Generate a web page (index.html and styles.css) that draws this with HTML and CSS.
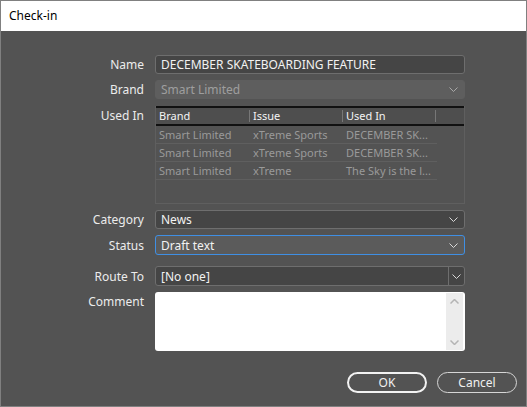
FILE: index.html
```html
<!DOCTYPE html>
<html lang="en">
<head>
  <meta charset="UTF-8" />
  <title>Check-in</title>
  <link rel="stylesheet" href="styles.css">
</head>
<body>
  <div class="window">
    <div class="titlebar">Check-in</div>

    <div class="form">
      <label class="lbl">Name</label>
      <div class="field text">DECEMBER SKATEBOARDING FEATURE</div>

      <label class="lbl">Brand</label>
      <div class="field select disabled">
        <span>Smart Limited</span>
        <svg class="chev" width="9" height="5" viewBox="0 0 9 5"><path d="M0.5 0.5 L4.5 4.5 L8.5 0.5" /></svg>
      </div>

      <label class="lbl top">Used In</label>
      <div class="table">
        <div class="thead">
          <div class="th c1">Brand</div>
          <div class="th c2">Issue</div>
          <div class="th c3">Used In</div>
        </div>
        <div class="tr">
          <div class="td c1">Smart Limited</div>
          <div class="td c2">xTreme Sports</div>
          <div class="td c3">DECEMBER SK...</div>
        </div>
        <div class="tr">
          <div class="td c1">Smart Limited</div>
          <div class="td c2">xTreme Sports</div>
          <div class="td c3">DECEMBER SK...</div>
        </div>
        <div class="tr">
          <div class="td c1">Smart Limited</div>
          <div class="td c2">xTreme</div>
          <div class="td c3">The Sky is the l...</div>
        </div>
      </div>

      <label class="lbl">Category</label>
      <div class="field select">
        <span>News</span>
        <svg class="chev" width="9" height="5" viewBox="0 0 9 5"><path d="M0.5 0.5 L4.5 4.5 L8.5 0.5" /></svg>
      </div>

      <label class="lbl">Status</label>
      <div class="field select focused">
        <span>Draft text</span>
        <svg class="chev" width="9" height="5" viewBox="0 0 9 5"><path d="M0.5 0.5 L4.5 4.5 L8.5 0.5" /></svg>
      </div>

      <label class="lbl route">Route To</label>
      <div class="field combo route">
        <span class="combo-text">[No one]</span>
        <span class="combo-btn">
          <svg class="chev" width="9" height="5" viewBox="0 0 9 5"><path d="M0.5 0.5 L4.5 4.5 L8.5 0.5" /></svg>
        </span>
      </div>

      <label class="lbl top comment-lbl">Comment</label>
      <div class="comment">
        <div class="scrollbar">
          <svg width="9" height="5" viewBox="0 0 9 5"><path d="M0.5 4.5 L4.5 0.5 L8.5 4.5" /></svg>
          <svg width="9" height="5" viewBox="0 0 9 5"><path d="M0.5 0.5 L4.5 4.5 L8.5 0.5" /></svg>
        </div>
      </div>
    </div>

    <div class="buttons">
      <button class="btn default">OK</button>
      <button class="btn">Cancel</button>
    </div>
  </div>
</body>
</html>
```

FILE: styles.css
```css
* {
  box-sizing: border-box;
}

html, body {
  margin: 0;
  padding: 0;
  background: #535353;
}

body {
  font-family: "Noto Sans", "Open Sans", sans-serif;
  font-size: 12px;
  color: #ececec;
}

.window {
  width: 527px;
  height: 407px;
  border: 1px solid #808080;
  background: #535353;
}

.titlebar {
  height: 30px;
  background: #ffffff;
  color: #000;
  padding-left: 8px;
  line-height: 30px;
}

.form {
  display: grid;
  grid-template-columns: 143px 310px;
  column-gap: 11px;
  row-gap: 6px;
  padding-top: 24px;
  align-items: center;
}

.lbl {
  text-align: right;
  color: #ececec;
}

.lbl.top {
  align-self: start;
  padding-top: 2px;
}

.lbl.route,
.field.route {
  margin-top: 5px;
}

.comment-lbl {
  margin-top: -1px;
}

.field {
  height: 19px;
  border-radius: 3px;
  display: flex;
  align-items: center;
  padding: 0 5px;
  white-space: nowrap;
}

.field.focused,
.field.route {
  height: 20px;
}

.text {
  background: #454545;
  border: 1px solid #6e6e6e;
  color: #f2f2f2;
}

.select {
  background: #454545;
  border: 1px solid #6e6e6e;
  justify-content: space-between;
  color: #f2f2f2;
}

.select.disabled {
  background: #5e5e5e;
  border-color: #5e5e5e;
  color: #9e9e9e;
}

.select.focused {
  background: #5b5b5b;
  border-color: #3f8fe4;
}

.chev {
  margin-right: 1px;
}

.chev path,
.scrollbar path {
  fill: none;
  stroke: #d8d8d8;
  stroke-width: 1;
}

.disabled .chev path {
  stroke: #a8a8a8;
}

.combo {
  background: #454545;
  border: 1px solid #6e6e6e;
  padding: 0;
}

.combo-text {
  flex: 1;
  padding-left: 5px;
  color: #f2f2f2;
}

.combo-btn {
  width: 16px;
  height: 100%;
  border-left: 1px solid #6e6e6e;
  display: flex;
  align-items: center;
  justify-content: center;
}

.table {
  height: 98px;
  border: 1px solid #5f5f5f;
  border-top: none;
  margin-top: 1px;
}

.thead {
  display: flex;
  height: 20px;
  border-top: 2px solid #111;
  border-bottom: 2px solid #111;
  background: #4e4e4e;
  font-size: 11px;
  color: #f4f4f4;
  width: 100%;
}

.th {
  padding-left: 3px;
  border-right: 1px solid #777;
  margin: 2px 0;
  height: 12px;
  line-height: 12px;
}

.c1 { width: 94px; }
.c2 { width: 93px; }
.c3 { width: 93px; }

.tr {
  display: flex;
  width: 281px;
  height: 18px;
  border-bottom: 1px solid #5f5f5f;
  color: #9a9a9a;
  font-size: 11px;
}

.td {
  line-height: 18px;
  padding-left: 3px;
  white-space: nowrap;
}

.comment {
  height: 59px;
  background: #ffffff;
  border-radius: 3px;
  display: flex;
  justify-content: flex-end;
  padding: 1px 2px 1px 0;
}

.scrollbar {
  width: 17px;
  background: #ececec;
  display: flex;
  flex-direction: column;
  justify-content: space-between;
  align-items: center;
  padding: 6px 0 5px;
}

.scrollbar path {
  stroke: #b4b4b4;
  stroke-width: 1.5;
}

.buttons {
  display: flex;
  justify-content: flex-end;
  gap: 10px;
  padding-right: 9px;
  margin-top: 21px;
}

.btn {
  width: 80px;
  height: 21px;
  border-radius: 11px;
  background: transparent;
  border: 1px solid #d6d6d6;
  color: #f0f0f0;
  font-family: "Noto Sans", "Open Sans", sans-serif;
  font-size: 12px;
  padding: 0;
  line-height: 18px;
}

.btn.default {
  border: 2px solid #f2f2f2;
}
```
